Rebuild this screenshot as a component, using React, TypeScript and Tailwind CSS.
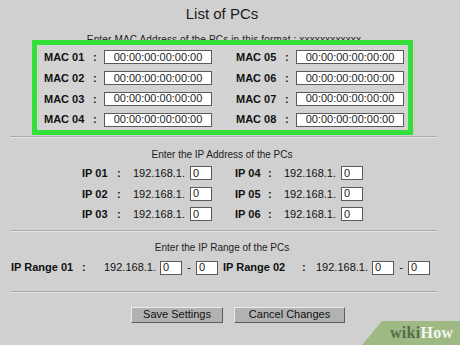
const macLeft = ["01", "02", "03", "04"];
const macRight = ["05", "06", "07", "08"];
const ipRows = [
  ["01", "04"],
  ["02", "05"],
  ["03", "06"],
];

function Field({ value, className }: { value: string; className: string }) {
  return (
    <div
      className={`h-[14px] bg-white border border-[#5a5a5a] flex items-center text-[11px] leading-none text-[#222] ${className}`}
    >
      {value}
    </div>
  );
}

function Divider({ className = "" }: { className?: string }) {
  return <div className={`mx-[10px] w-[427px] border-t border-[#a9a9a9] border-b border-b-[#e4e4e4] ${className}`} />;
}

function MacCell({ n }: { n: string }) {
  return (
    <div className="flex items-center h-[21px]">
      <span className="w-[49px] font-bold text-[11px]">MAC {n}</span>
      <span className="w-[11px] font-bold text-[11px]">:</span>
      <Field value="00:00:00:00:00:00" className="w-[108px] justify-center" />
    </div>
  );
}

function IpCell({ n, first }: { n: string; first?: boolean }) {
  return (
    <div className="flex items-center">
      <span className={`${first ? "w-[35px]" : "w-[33px]"} font-bold text-[11px]`}>IP {n}</span>
      <span className="w-[16px] font-bold text-[11px]">:</span>
      <span className="w-[57px] text-[11px]">192.168.1.</span>
      <Field value="0" className="w-[22px] pl-[2px]" />
    </div>
  );
}

function RangeCell({ n, labelW, colonW }: { n: string; labelW: string; colonW: string }) {
  return (
    <div className="flex items-center">
      <span className={`${labelW} font-bold text-[11px]`}>IP Range {n}</span>
      <span className={`${colonW} font-bold text-[11px]`}>:</span>
      <span className="w-[56px] text-[11px]">192.168.1.</span>
      <Field value="0" className="w-[22px] pl-[2px]" />
      <span className="w-[14px] text-center text-[11px]">-</span>
      <Field value="0" className="w-[22px] pl-[2px]" />
    </div>
  );
}

export default function App() {
  return (
    <div
      className="relative w-[460px] h-[345px] overflow-hidden bg-[#d0d0d0] text-[#111]"
      style={{ fontFamily: '"Liberation Sans", Arial, sans-serif' }}
    >
      <div className="w-[444px] flex flex-col">
        <h1 className="pt-[5px] h-[24px] text-center text-[15px] leading-[18px] text-[#1a1a1a]">List of PCs</h1>

        <p className="pt-[10px] pl-[4px] text-center text-[10px] leading-[12px] tracking-[0.15px] text-[#222]">
          Enter MAC Address of the PCs in this format : xxxxxxxxxxxx
        </p>

        <div className="relative mt-[-6px] ml-[32px] w-[381px] h-[95px] border-[5px] border-[#33e03a] bg-[#d3d3d3] pl-[7px] pt-[2px] flex">
          <div className="flex flex-col">
            {macLeft.map((n) => (
              <MacCell key={n} n={n} />
            ))}
          </div>
          <div className="flex flex-col ml-[24px]">
            {macRight.map((n) => (
              <MacCell key={n} n={n} />
            ))}
          </div>
        </div>

        <Divider className="mt-[1px]" />

        <p className="mt-[11px] text-center text-[10px] leading-[12px] text-[#222]">Enter the IP Address of the PCs</p>
        <div className="mt-[2px] flex flex-col pl-[82px]">
          {ipRows.map(([a, b]) => (
            <div key={a} className="h-[20.5px] flex items-center gap-[23px]">
              <IpCell n={a} first />
              <IpCell n={b} />
            </div>
          ))}
        </div>

        <Divider className="mt-[5px]" />

        <p className="mt-[10px] text-center text-[10px] leading-[12px] text-[#222]">Enter the IP Range of the PCs</p>
        <div className="mt-[4px] h-[20px] flex items-center pl-[11px] gap-[5px]">
          <RangeCell n="01" labelW="w-[71px]" colonW="w-[22px]" />
          <RangeCell n="02" labelW="w-[79px]" colonW="w-[14px]" />
        </div>

        <Divider className="mt-[13px]" />

        <div className="mt-[14px] flex pl-[131px] gap-[11px]">
          <button className="w-[92px] h-[16px] bg-[#b2b2b2] border border-t-[#ececec] border-l-[#ececec] border-b-[#5e5e5e] border-r-[#5e5e5e] text-[11px] leading-none text-[#111]">
            Save Settings
          </button>
          <button className="w-[111px] h-[16px] bg-[#b2b2b2] border border-t-[#ececec] border-l-[#ececec] border-b-[#5e5e5e] border-r-[#5e5e5e] text-[11px] leading-none text-[#111]">
            Cancel Changes
          </button>
        </div>
      </div>

      <div className="absolute right-0 bottom-0 w-[98px] h-[24px]">
        <svg width="98" height="24" className="absolute inset-0">
          <polygon points="20,0 98,0 98,24 0,24" fill="#9fb985" />
        </svg>
        <span
          className="absolute left-[28px] top-[3px] text-[16px] font-bold leading-[18px] tracking-[0.3px]"
          style={{ fontFamily: '"Liberation Serif", "DejaVu Serif", serif' }}
        >
          <span className="text-[#586b48]">wiki</span>
          <span className="text-[#f4f7ef]">How</span>
        </span>
      </div>
    </div>
  );
}
